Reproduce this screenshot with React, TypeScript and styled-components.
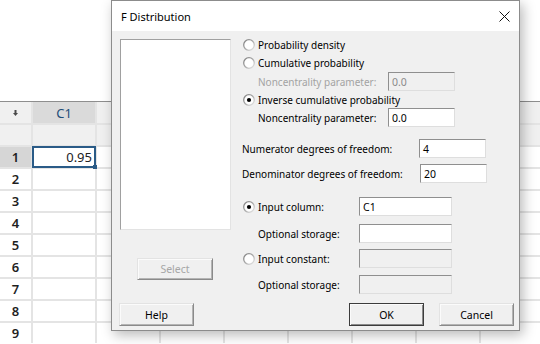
import React, { useId } from "react";
import styled, { createGlobalStyle } from "styled-components";

const Global = createGlobalStyle`
  html, body { margin: 0; padding: 0; background: #ffffff; }
  body { width: 540px; height: 344px; overflow: hidden; font-family: "Noto Sans", sans-serif; }
`;

const Page = styled.div`
  position: relative;
  width: 540px;
  height: 344px;
  overflow: hidden;
  background: #ffffff;
`;

const TopArea = styled.div`
  height: 101px;
  border-bottom: 1px solid #8e8e8e;
`;

const Sheet = styled.div`
  display: grid;
  grid-template-columns: 31px repeat(8, 62px);
  grid-template-rows: 21px;
  grid-auto-rows: 20px;
  gap: 2px;
  background: #e4e4e4;
  font-family: "Noto Sans", sans-serif;
  font-size: 13px;
`;

const Cell = styled.div<{ $bg?: string; $align?: string; $color?: string; $bold?: boolean; $sel?: boolean }>`
  position: relative;
  background: ${(p) => p.$bg || "#ffffff"};
  display: flex;
  align-items: center;
  justify-content: ${(p) => p.$align || "center"};
  color: ${(p) => p.$color || "#1f1f1f"};
  font-weight: ${(p) => (p.$bold ? 600 : 400)};
  padding: 0 3px;
  box-sizing: border-box;
  ${(p) =>
    p.$sel
      ? `z-index: 1; box-shadow: 0 0 0 1px #2a5b87, inset 0 0 0 1px #2a5b87;`
      : ""}
`;

const Handle = styled.span`
  position: absolute;
  right: -2px;
  bottom: -2px;
  width: 4px;
  height: 4px;
  background: #2a5b87;
`;

const Dialog = styled.div`
  position: absolute;
  left: 111px;
  top: 0;
  width: 409px;
  height: 331px;
  box-sizing: border-box;
  border: 1px solid #8c8c8c;
  background: #f0f0f0;
  box-shadow: 3px 4px 12px rgba(0, 0, 0, 0.28);
  display: flex;
  flex-direction: column;
  font-family: "Noto Sans", sans-serif;
  font-size: 10px;
  color: #000000;
`;

const TitleBar = styled.div`
  height: 30px;
  flex: none;
  background: #ffffff;
  display: flex;
  align-items: center;
  justify-content: space-between;
  padding: 0 9px 0 9px;
  font-size: 11px;
`;

const Body = styled.div`
  display: flex;
  flex-direction: column;
  padding: 8px 5px 0 8px;
`;

const Main = styled.div`
  display: flex;
  height: 264px;
`;

const LeftCol = styled.div`
  display: flex;
  flex-direction: column;
  width: 111px;
  flex: none;
`;

const ListBox = styled.div`
  height: 191px;
  box-sizing: border-box;
  background: #ffffff;
  border: 1px solid;
  border-color: #a0a0a0 #e3e3e3 #e3e3e3 #a0a0a0;
`;

const RightCol = styled.div`
  display: flex;
  flex-direction: column;
  margin-left: 11px;
  margin-top: -3px;
  flex: 1;
`;

const Row = styled.div<{ $h: number; $mt?: number }>`
  display: flex;
  align-items: center;
  height: ${(p) => p.$h}px;
  margin-top: ${(p) => p.$mt || 0}px;
  white-space: nowrap;
`;

const Label = styled.span<{ $indent?: number; $w?: number; $disabled?: boolean }>`
  margin-left: ${(p) => p.$indent || 0}px;
  width: ${(p) => (p.$w ? `${p.$w}px` : "auto")};
  flex: none;
  color: ${(p) => (p.$disabled ? "#a3a3a3" : "#000000")};
`;

const Field = styled.div<{ $w: number; $disabled?: boolean }>`
  width: ${(p) => p.$w}px;
  height: 19px;
  box-sizing: border-box;
  flex: none;
  background: ${(p) => (p.$disabled ? "#f0f0f0" : "#ffffff")};
  border: 1px solid;
  border-color: #8f8f8f #dedede #dedede #8f8f8f;
  color: ${(p) => (p.$disabled ? "#8a8a8a" : "#000000")};
  display: flex;
  align-items: center;
  padding-left: 3px;
  font-size: 10.5px;
`;

const Btn = styled.button<{ $default?: boolean; $disabled?: boolean }>`
  width: 75px;
  height: ${(p) => (p.$default ? 23 : 23)}px;
  box-sizing: border-box;
  padding: 0;
  margin: 0;
  font-family: "Noto Sans", sans-serif;
  font-size: 10.5px;
  color: ${(p) => (p.$disabled ? "#a6a6a6" : "#000000")};
  background: #f0f0f0;
  border: 1px solid;
  border-color: ${(p) => (p.$default ? "#3c3c3c" : "#e3e3e3 #8a8a8a #8a8a8a #e3e3e3")};
  box-shadow: ${(p) =>
    p.$default
      ? "inset 1px 1px 0 #fbfbfb, inset -1px -1px 0 #8a8a8a"
      : "inset 1px 1px 0 #fbfbfb, inset -1px -1px 0 #b4b4b4"};
  display: flex;
  align-items: center;
  justify-content: center;
`;

const SelectBtn = styled(Btn)`
  margin: 28px 0 0 17px;
  width: 76px;
  height: 22px;
`;

const Footer = styled.div`
  display: flex;
  justify-content: space-between;
  margin-left: -1px;
`;

const BtnGroup = styled.div`
  display: flex;
  gap: 15px;
`;

const RadioSvg = styled.svg`
  flex: none;
  margin: 0 3px 0 1px;
`;

function Radio({ checked }: { checked?: boolean }) {
  const id = useId().replace(/:/g, "");
  return (
    <RadioSvg width="12" height="12" viewBox="0 0 12 12">
      <defs>
        <linearGradient id={`g${id}`} x1="0" y1="0" x2="1" y2="1">
          <stop offset="0" stopColor="#7d7d7d" />
          <stop offset="0.5" stopColor="#a8a8a8" />
          <stop offset="1" stopColor="#ececec" />
        </linearGradient>
      </defs>
      <circle cx="6" cy="6" r="5.3" fill="#ffffff" stroke={`url(#g${id})`} strokeWidth="1.3" />
      {checked && <circle cx="6" cy="6" r="2.1" fill="#000000" />}
    </RadioSvg>
  );
}

function CloseIcon() {
  return (
    <svg width="11" height="11" viewBox="0 0 11 11">
      <path d="M0.5 0.5 L10.5 10.5 M10.5 0.5 L0.5 10.5" stroke="#111111" strokeWidth="1" />
    </svg>
  );
}

function SortIcon() {
  return (
    <svg width="5" height="6" viewBox="0 0 5 6">
      <rect x="1.5" y="0" width="2" height="3" fill="#4a4a4a" />
      <path d="M0 3 L5 3 L2.5 6 Z" fill="#4a4a4a" />
    </svg>
  );
}

const COLS = 8;

export default function App() {
  const rows = [2, 3, 4, 5, 6, 7, 8, 9];
  return (
    <Page>
      <Global />
      <TopArea />
      <Sheet>
        <Cell $bg="#f0f0f0">
          <SortIcon />
        </Cell>
        <Cell $bg="#dadada" $color="#1e4d78">C1</Cell>
        {Array.from({ length: COLS - 1 }).map((_, i) => (
          <Cell key={`h${i}`} $bg="#f0f0f0" />
        ))}
        <Cell $bg="#f0f0f0" />
        {Array.from({ length: COLS }).map((_, i) => (
          <Cell key={`n${i}`} $bg="#f0f0f0" />
        ))}
        <Cell $bg="#d6d6d6" $bold>1</Cell>
        <Cell $align="flex-end" $color="#222222" $sel>
          0.95
          <Handle />
        </Cell>
        {Array.from({ length: COLS - 1 }).map((_, i) => (
          <Cell key={`r1${i}`} />
        ))}
        {rows.map((r) => (
          <React.Fragment key={r}>
            <Cell $bold>{r}</Cell>
            {Array.from({ length: COLS }).map((_, i) => (
              <Cell key={i} />
            ))}
          </React.Fragment>
        ))}
      </Sheet>

      <Dialog>
        <TitleBar>
          <span>F Distribution</span>
          <CloseIcon />
        </TitleBar>
        <Body>
          <Main>
            <LeftCol>
              <ListBox />
              <SelectBtn $disabled>Select</SelectBtn>
            </LeftCol>
            <RightCol>
              <Row $h={18}>
                <Radio />
                <Label>Probability density</Label>
              </Row>
              <Row $h={18}>
                <Radio />
                <Label>Cumulative probability</Label>
              </Row>
              <Row $h={19}>
                <Label $indent={16} $w={130} $disabled>Noncentrality parameter:</Label>
                <Field $w={67} $disabled>0.0</Field>
              </Row>
              <Row $h={17}>
                <Radio checked />
                <Label>Inverse cumulative probability</Label>
              </Row>
              <Row $h={19}>
                <Label $indent={16} $w={130}>Noncentrality parameter:</Label>
                <Field $w={67}>0.0</Field>
              </Row>
              <Row $h={19} $mt={12}>
                <Label $w={177}>Numerator degrees of freedom:</Label>
                <Field $w={67}>4</Field>
              </Row>
              <Row $h={19} $mt={6}>
                <Label $w={178}>Denominator degrees of freedom:</Label>
                <Field $w={67}>20</Field>
              </Row>
              <Row $h={19} $mt={14}>
                <Radio checked />
                <Label $w={101}>Input column:</Label>
                <Field $w={93}>C1</Field>
              </Row>
              <Row $h={19} $mt={8}>
                <Label $indent={16} $w={101}>Optional storage:</Label>
                <Field $w={93} />
              </Row>
              <Row $h={19} $mt={6}>
                <Radio />
                <Label $w={101}>Input constant:</Label>
                <Field $w={93} $disabled />
              </Row>
              <Row $h={19} $mt={7}>
                <Label $indent={16} $w={101}>Optional storage:</Label>
                <Field $w={93} $disabled />
              </Row>
            </RightCol>
          </Main>
          <Footer>
            <Btn>Help</Btn>
            <BtnGroup>
              <Btn $default>OK</Btn>
              <Btn>Cancel</Btn>
            </BtnGroup>
          </Footer>
        </Body>
      </Dialog>
    </Page>
  );
}
